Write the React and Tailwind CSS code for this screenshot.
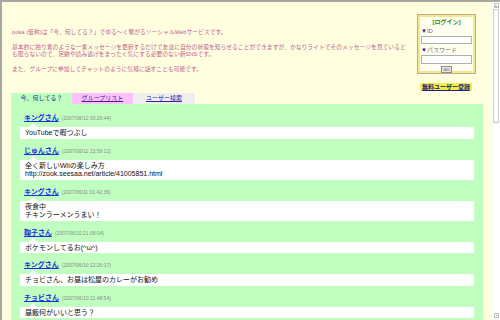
import React from "react";

const posts = [
  { name: "キングさん", date: "(2007/06/12 03:26:44)", lines: ["YouTubeで暇つぶし"] },
  {
    name: "じゅんさん",
    date: "(2007/06/11 23:59:12)",
    lines: ["全く新しいWiiの楽しみ方", "http://zook.seesaa.net/article/41005851.html"],
  },
  { name: "キングさん", date: "(2007/06/11 01:42:36)", lines: ["夜食中", "チキンラーメンうまい！"] },
  { name: "鞠子さん", date: "(2007/06/10 21:08:04)", lines: ["ポケモンしてるお(^ω^)"] },
  { name: "キングさん", date: "(2007/06/10 12:26:17)", lines: ["チョビさん、お昼は松屋のカレーがお勧め"] },
  { name: "チョビさん", date: "(2007/06/10 11:48:54)", lines: ["昼飯何がいいと思う？"] },
];

const font = { fontFamily: '"Liberation Sans", "Noto Sans CJK JP", sans-serif' };

const LoginBox = () => (
  <div className="w-[59px] h-[60px] border border-[#c8a890] shadow-[inset_0_0_0_2px_#f4e88c] bg-[#fffff0] px-[3px] pt-[3px] flex flex-col text-[6px] leading-[8px]">
    <div className="text-center font-bold text-[#2a8a2a]">[ログイン]</div>
    <div className="mt-[1px] text-[#806080]">
      <span className="text-[#40107a]">▼</span>ID
    </div>
    <div className="mt-[1px] h-[8px] bg-white border border-[#b0b0b0]" />
    <div className="mt-[2px] text-[#806080]">
      <span className="text-[#40107a]">▼</span>パスワード
    </div>
    <div className="mt-[1px] h-[9px] bg-white border border-[#b0b0b0]" />
    <div className="mt-[2px] flex justify-center">
      <div className="w-[11px] h-[7px] bg-[#e4e4e4] border border-[#909090] text-[4px] leading-[5px] text-center text-[#404040]">
        GO
      </div>
    </div>
  </div>
);

const Post = ({ post }) => (
  <div className="pb-[7px]">
    <div className="h-[10px] leading-[10px] pl-[4px] flex items-baseline gap-[3px] whitespace-nowrap">
      <span className="text-[7px] font-bold text-[#2030e0] underline">{post.name}</span>
      <span className="text-[5px] text-[#8a8a8a]">{post.date}</span>
    </div>
    <div className="h-[4px] relative">
      <div className="absolute left-[9px] bottom-0 w-0 h-0 border-l-[4px] border-r-[4px] border-b-[4px] border-l-transparent border-r-transparent border-b-white" />
    </div>
    <div className="bg-white pl-[5px] pt-[2px] pb-[1px] text-[7px] leading-[8.5px] text-[#111]">
      {post.lines.map((l, i) => (
        <div key={i}>{l}</div>
      ))}
    </div>
  </div>
);

export default function App() {
  return (
    <div
      className="w-[500px] h-[320px] overflow-hidden flex bg-[#ffffe0] border-l-2 border-t-2 border-[#a8a8a0]"
      style={font}
    >
      <div className="flex-1 flex flex-col">
        {/* header: description + login */}
        <div className="flex h-[95px]">
          <div className="flex-1 pl-[10px] pt-[27px] text-[5.8px] leading-[7.5px] text-[#c06090] whitespace-nowrap">
            <p>poka (仮称)は「今、何してる？」でゆる～く繋がるソーシャルWebサービスです。</p>
            <p className="mt-[7px]">
              基本的に独り言のような一言メッセージを更新するだけで友達に自分の状態を知らせることができますが、かなりライトでそのメッセージを見ていると
              <br />
              も限らないので、足跡や読み逃げをまったく気にする必要のない新SNSです。
            </p>
            <p className="mt-[7px]">また、グループに参加してチャットのように気軽に話すことも可能です。</p>
          </div>
          <div className="w-[75px] pt-[12px] flex flex-col">
            <LoginBox />
            <div className="mt-[9px] ml-[3px] w-[52px] h-[8px] bg-[#f0ee40] text-[6px] leading-[8px] font-bold text-[#20208a] underline text-center whitespace-nowrap">
              無料ユーザー登録
            </div>
          </div>
        </div>

        {/* tabs */}
        <div className="ml-[9px] mt-[2px] flex h-[11px] text-[6px] leading-[11px] whitespace-nowrap">
          <div className="w-[61px] bg-[#c0ffc0] text-center text-[#1a2a8a]">今、何してる？</div>
          <div className="w-[61px] bg-[#ffc0ff] text-center text-[#4020a0] underline">グループリスト</div>
          <div className="w-[62px] bg-[#eeeeee] text-center text-[#2a2aa0] underline">ユーザー検索</div>
        </div>

        {/* timeline */}
        <div className="ml-[9px] mr-[9px] flex-1 bg-[#c0ffc0] px-[9px] pt-[9px]">
          {posts.map((p, i) => (
            <Post key={i} post={p} />
          ))}
        </div>
      </div>

      {/* scrollbar */}
      <div className="w-[8px] bg-white flex flex-col items-center">
        <div className="mt-[1px] w-[5px] h-[5px] border border-[#b8c4b8] flex items-center justify-center">
          <div className="w-0 h-0 border-l-[1.5px] border-r-[1.5px] border-b-[2px] border-l-transparent border-r-transparent border-b-[#8a988a]" />
        </div>
        <div className="mt-[1px] w-[6px] h-[114px] border border-[#c4d0c4] bg-[#fbfdfb]" />
        <div className="flex-1" />
        <div className="mb-[2px] w-[5px] h-[5px] border border-[#b8c4b8] flex items-center justify-center">
          <div className="w-[1px] h-[1px] bg-[#8a988a]" />
        </div>
      </div>
    </div>
  );
}
